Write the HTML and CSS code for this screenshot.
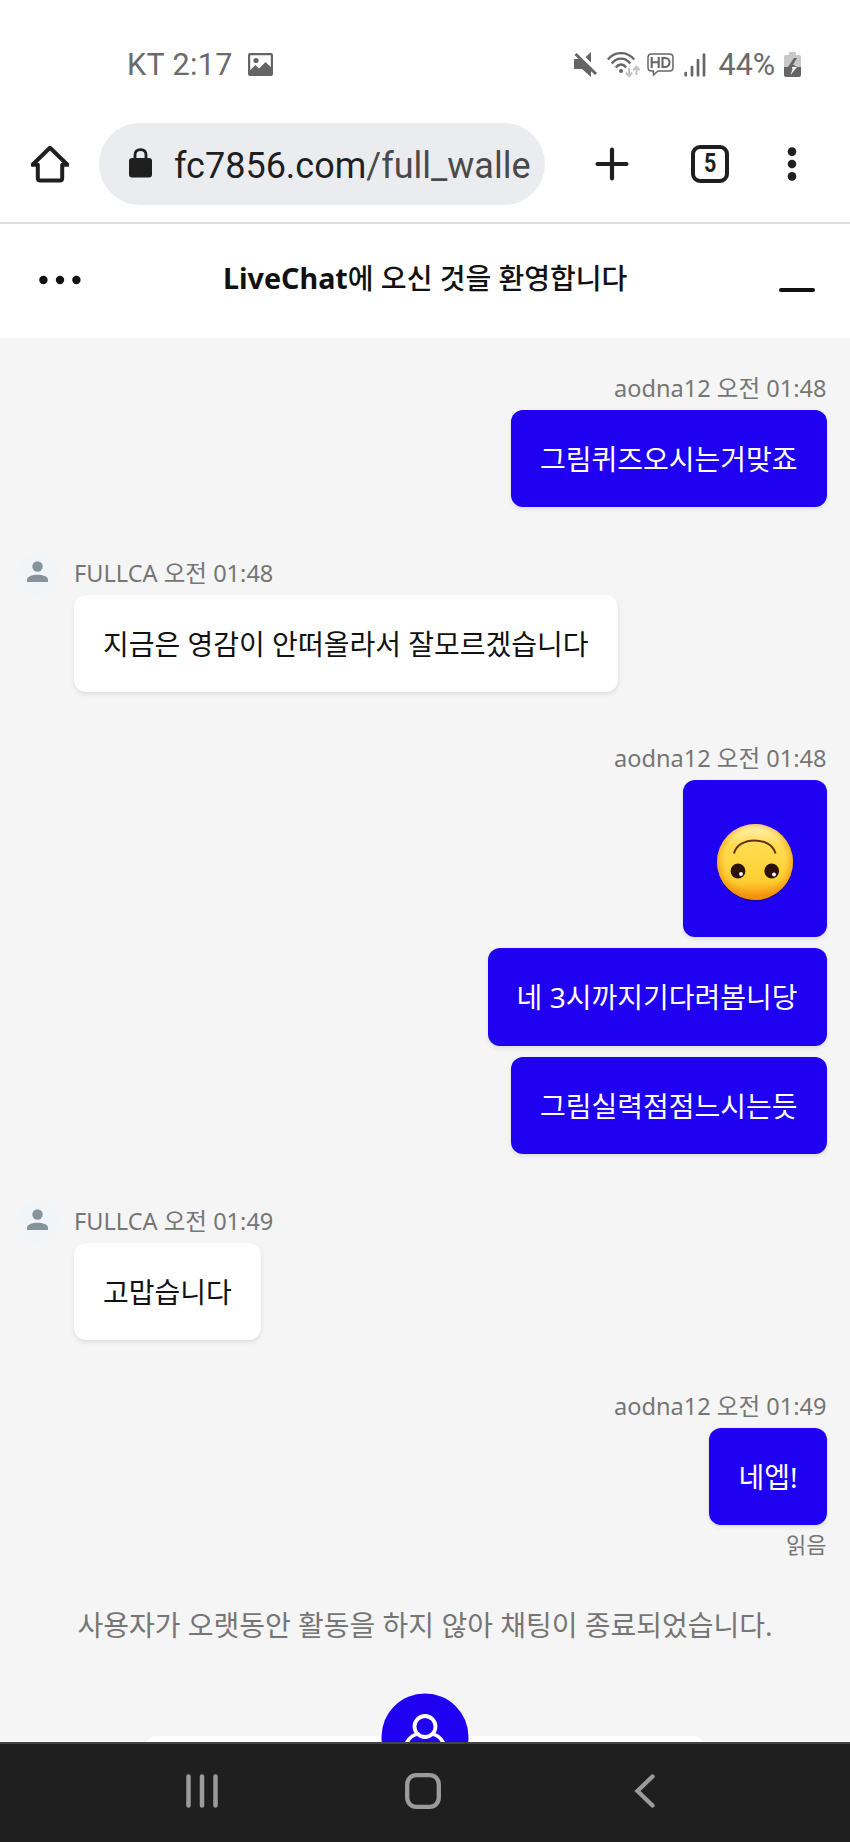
FILE: index.html
```html
<!DOCTYPE html>
<html lang="ko">
<head>
<meta charset="utf-8">
<title>LiveChat</title>
<link rel="stylesheet" href="styles.css">
</head>
<body>
<div class="screen">
  <div class="status">
    <span class="status-text clock">KT 2:17</span>
    <svg class="picture" width="25" height="23" viewBox="0 0 25 23"><path fill="#656565" fill-rule="evenodd" d="M2 0H23Q25 0 25 2V21Q25 23 23 23H2Q0 23 0 21V2Q0 0 2 0ZM2.2 2.2V17L7.500 12L11 15.500L17.500 9L22.800 14V2.200Z"/><circle cx="8" cy="7.500" r="2.600" fill="#656565"/></svg>
    <svg class="mute" width="24" height="25" viewBox="0 0 24 25" fill="#656565"><path d="M1 7H7L17 17V25L8 17H1Q0 17 0 16V8Q0 7 1 7ZM17 0V11L11 5.500Z"/><path d="M5 0L24 20" stroke="#fff" stroke-width="2.500"/><path d="M1.500 2L22 22" stroke="#656565" stroke-width="3"/></svg>
    <svg class="wifi" width="33" height="26" viewBox="0 0 33 26" fill="none" stroke="#656565" stroke-width="2.300"><path d="M.8 7.500C8-1 20-1 27.200 7.500M4.800 11.500C10 5 18 5 23.200 11.500M8.700 15.500C12 11.500 16 11.500 19.300 15.500"/><circle cx="14" cy="19" r="2" fill="#656565" stroke="none"/><path stroke="#c2c2c2" stroke-width="2" d="M22 16V24M18.700 20.800L22 24.200L25.300 20.800M29.500 23V15M26.200 18.200L29.500 14.800L32.700 18.200"/></svg>
    <svg class="hd" width="27" height="23" viewBox="0 0 27 23" fill="none" stroke="#656565"><path stroke-width="1.500" d="M4.500 1H22.500Q26 1 26 4.500V14.500Q26 18 22.500 18H11L6.500 22V18H4.500Q1 18 1 14.500V4.500Q1 1 4.500 1Z"/><path stroke-width="2.100" d="M4.700 4V15M11.700 4V15M4.700 9.300H11.700M15.500 5V14H18C24 14 24 5 18 5Z"/></svg>
    <svg class="signal" width="22" height="24" viewBox="0 0 22 24" stroke="#656565" stroke-width="2.700" stroke-linecap="round"><path d="M1.700 20V22.300M8 14V22.300M14 7V22.300M20 1.700V22.300"/></svg>
    <span class="status-text percent">44%</span>
    <svg class="battery" width="17" height="25" viewBox="0 0 17 25"><path fill="#c8c8c8" d="M5 0H12V3H15Q17 3 17 5V15H0V5Q0 3 2 3H5Z"/><path fill="#656565" d="M0 15H17V23Q17 25 15 25H2Q0 25 0 23Z"/><path fill="#656565" d="M10 6L4 15H13L9 12.500L13 6Z"/><path fill="#fff" d="M8 15H13L6.500 23L8.500 17Z"/></svg>
  </div>

  <div class="toolbar">
    <svg class="home" width="38" height="38" viewBox="0 0 38 38" fill="none" stroke="#1f1f1f" stroke-width="4" stroke-linejoin="round"><path d="M1.500 19.800H6.800V33Q6.800 35.500 9.300 35.500H28.700Q31.200 35.500 31.200 33V19.800H36.500L19 2.800Z"/></svg>
    <div class="address">
      <svg class="lock" width="23" height="30" viewBox="0 0 23 30"><rect y="10" width="23" height="19.500" rx="3" fill="#1f1f1f"/><path d="M6 12V7Q6 1.700 11.500 1.700Q17 1.700 17 7V12" fill="none" stroke="#1f1f1f" stroke-width="2.800"/></svg>
      <div class="url">fc7856.com<span class="path">/full_walle</span></div>
    </div>
    <svg class="plus" width="34" height="34" viewBox="0 0 34 34" stroke="#1f1f1f" stroke-width="4.200" stroke-linecap="round"><path d="M2.500 17H31.500M17 2.500V31.500"/></svg>
    <div class="tabs"><span class="count">5</span></div>
    <svg class="more" width="10" height="34" viewBox="0 0 10 34" fill="#1f1f1f"><circle cx="5" cy="4.600" r="4.300"/><circle cx="5" cy="17" r="4.300"/><circle cx="5" cy="29.400" r="4.300"/></svg>
  </div>

  <div class="header">
    <svg class="menu" width="42" height="10" viewBox="0 0 42 10" fill="#111"><circle cx="4.400" cy="5" r="4.200"/><circle cx="21" cy="5" r="4.200"/><circle cx="37.400" cy="5" r="4.200"/></svg>
    <div class="title"><b>LiveChat</b>에 오신 것을 환영합니다</div>
    <div class="minimize"></div>
  </div>

  <div class="chat">
    <div class="group own">
      <div class="meta">aodna12 오전 01:48</div>
      <div class="bubble">그림퀴즈오시는거맞죠</div>
    </div>
    <div class="group agent">
      <svg class="person" width="42" height="42" viewBox="0 0 42 42"><circle cx="21" cy="21" r="21" fill="#f2f5f8"/><g fill="#87929b"><circle cx="20.500" cy="13.500" r="5.200"/><path d="M10 29V26.500C10 20 31 20 31 26.500V29Z"/></g></svg>
      <div class="meta">FULLCA 오전 01:48</div>
      <div class="bubble">지금은 영감이 안떠올라서 잘모르겠습니다</div>
    </div>
    <div class="group own">
      <div class="meta">aodna12 오전 01:48</div>
      <div class="bubble emoji">
        <svg width="78" height="80" viewBox="0 0 78 80">
          <defs>
            <linearGradient id="face" x1="0" y1="0" x2="0" y2="1"><stop offset="0" stop-color="#fff3bd"/><stop offset=".28" stop-color="#ffdc50"/><stop offset=".75" stop-color="#ffcf32"/><stop offset="1" stop-color="#f58a0b"/></linearGradient>
            <radialGradient id="edge" cx=".5" cy=".47" r=".53"><stop offset=".75" stop-color="#f59a10" stop-opacity="0"/><stop offset="1" stop-color="#ef8907" stop-opacity=".75"/></radialGradient>
          </defs>
          <circle cx="39" cy="40.500" r="38" fill="#150080" opacity=".6"/>
          <circle cx="39" cy="39" r="38" fill="url(#face)"/><circle cx="39" cy="39" r="38" fill="url(#edge)"/>
          <path d="M18 30.500C22 13 55 13 59.500 30.500" fill="none" stroke="#67300b" stroke-width="2"/>
          <circle cx="22" cy="48" r="7.400" fill="#2b1204"/><circle cx="55.700" cy="48" r="7.400" fill="#2b1204"/>
          <circle cx="25" cy="51" r="1.900" fill="#fff"/><circle cx="58" cy="51.500" r="1.900" fill="#fff"/>
        </svg>
      </div>
      <div class="bubble">네 3시까지기다려봄니당</div>
      <div class="bubble">그림실력점점느시는듯</div>
    </div>
    <div class="group agent">
      <svg class="person" width="42" height="42" viewBox="0 0 42 42"><circle cx="21" cy="21" r="21" fill="#f2f5f8"/><g fill="#87929b"><circle cx="20.500" cy="13.500" r="5.200"/><path d="M10 29V26.500C10 20 31 20 31 26.500V29Z"/></g></svg>
      <div class="meta">FULLCA 오전 01:49</div>
      <div class="bubble">고맙습니다</div>
    </div>
    <div class="group own">
      <div class="meta">aodna12 오전 01:49</div>
      <div class="bubble">네엡!</div>
      <div class="read">읽음</div>
    </div>
    <div class="notice">사용자가 오랫동안 활동을 하지 않아 채팅이 종료되었습니다.</div>
    <div class="card">
      <svg class="avatar" width="88" height="88" viewBox="0 0 88 88"><circle cx="44" cy="44" r="43.500" fill="#2000f0"/><g fill="none" stroke="#fff" stroke-width="3.800"><circle cx="44" cy="33.500" r="10.500"/><path d="M24 55C26 46 31 42 37 41M51 41C57 42 62 46 64 55"/></g></svg>
    </div>
  </div>

  <div class="nav">
    <svg class="recents" width="34" height="36" viewBox="0 0 34 36" stroke="#9b9b9b" stroke-width="4.500" stroke-linecap="round"><path d="M3.500 3.500V32.500M17 3.500V32.500M30.500 3.500V32.500"/></svg>
    <svg class="nav-home" width="36" height="36" viewBox="0 0 36 36" fill="none" stroke="#9b9b9b" stroke-width="4.300"><rect x="2.200" y="2.200" width="31.600" height="31.600" rx="9"/></svg>
    <svg class="back" width="22" height="36" viewBox="0 0 22 36" fill="none" stroke="#9b9b9b" stroke-width="4.300" stroke-linecap="round"><path d="M18.500 3.500L3.500 18L18.500 32.500"/></svg>
  </div>
</div>
</body>
</html>
```
FILE: styles.css
```css
* { box-sizing: border-box; }
body { margin: 0; background: #fff; font-family: "Noto Sans", "Noto Sans CJK KR", sans-serif; }
svg { display: block; flex: none; }
.screen { width: 850px; height: 1842px; display: flex; flex-direction: column; overflow: hidden; }

.status { height: 123px; flex: none; display: flex; align-items: center; padding: 6px 49px 0 127px; }
.status-text { font: 30.5px/36px Roboto, sans-serif; color: #6a6a6a; white-space: nowrap; padding-top: 1px; }
.clock { width: 121px; letter-spacing: .4px; }
.mute { margin-left: auto; margin-right: 9px; }
.wifi { margin-right: 7px; }
.hd { margin-right: 10px; }
.signal { margin-right: 13px; }
.percent { width: 65.500px; }

.toolbar { height: 101px; flex: none; display: flex; align-items: center; padding: 0 53px 17px 31px; border-bottom: 2px solid #dedede; color: #1f1f1f; }
.address { width: 446px; height: 82px; margin-left: 30px; padding: 0 14px 0 30px; border-radius: 41px; background: #ebecf0; display: flex; align-items: center; }
.url { margin-left: 22px; padding-top: 3px; flex: 1; white-space: nowrap; font: 36px/50px Roboto, sans-serif; }
.path { color: #4a4a4a; }
.lock { margin-top: -3px; }
.plus { margin-left: 50px; }
.tabs { width: 38px; height: 38px; margin-left: 62px; border: 4px solid #1f1f1f; border-radius: 9px; font: bold 25px/29px Roboto, sans-serif; text-align: center; }
.count { display: inline-block; transform: scaleX(.86); }
.more { margin-left: auto; }

.header { height: 113.500px; flex: none; display: flex; align-items: center; padding: 0 35px 2px 39px; color: #111; }
.title { margin: -4px auto 0 142px; font-size: 28px; font-weight: 500; line-height: 40px; white-space: nowrap; }
.title b { font-size: 28.700px; }
.minimize { width: 36px; height: 4px; border-radius: 2px; background: #111; margin-top: 20px; }

.chat { flex: 1; min-height: 0; overflow: hidden; background: #f5f5f5; padding: 31px 23.500px 0; }
.group { display: flex; flex-direction: column; margin-bottom: 47.300px; position: relative; }
.own { align-items: flex-end; }
.agent { align-items: flex-start; padding-left: 50.500px; }
.meta { height: 41px; font-size: 23.550px; line-height: 39px; color: #757575; white-space: nowrap; }
.bubble { height: 97.100px; padding: 0 29px; border-radius: 12px; background: #fff; color: #111; font-size: 28px; line-height: 98px; white-space: nowrap; box-shadow: 0 2px 4px rgba(0, 0, 0, .1); }
.own .bubble { background: #2000f0; color: #fff; }
.bubble + .bubble { margin-top: 11.600px; }
.own .emoji { height: 156.600px; padding: 43px 33px 0; }
.person { position: absolute; left: -7px; top: -1px; }
.read { height: 39px; font-size: 22px; line-height: 38px; color: #757575; }
.notice { height: 50px; margin-top: -11px; text-align: center; font-size: 28px; line-height: 50px; color: #757575; white-space: nowrap; }
.card { width: 560px; height: 200px; margin: 86px auto 0; border-radius: 12px; background: #fff; display: flex; justify-content: center; }
.avatar { margin-top: -43px; }

.nav { height: 100px; flex: none; display: flex; align-items: flex-start; padding: 29px 0 0 185px; background: #1f1f1f; border-top: 2px solid #444; }
.nav-home { margin-left: 186px; }
.back { margin-left: 193px; }
```
